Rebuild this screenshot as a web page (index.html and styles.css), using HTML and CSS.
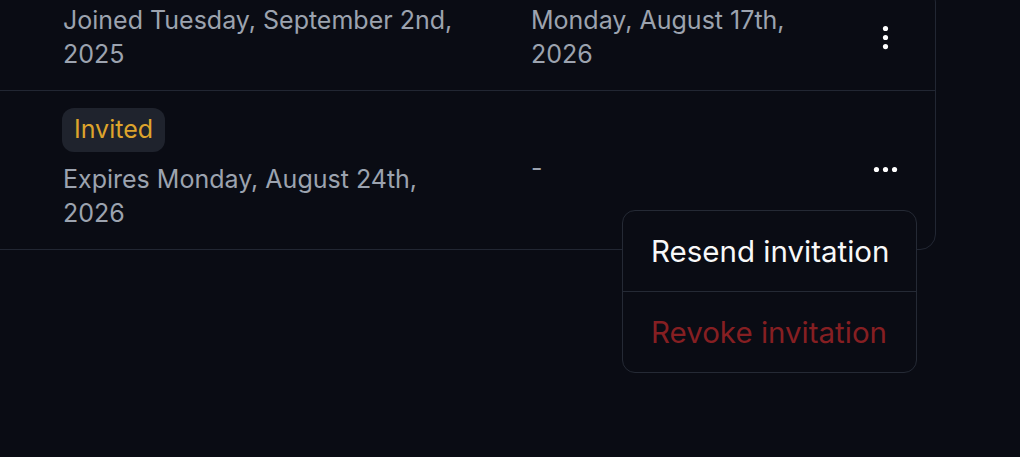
FILE: index.html
```html
<!DOCTYPE html>
<html lang="en">
<head>
<meta charset="utf-8">
<title>Members</title>
<link rel="stylesheet" href="styles.css">
</head>
<body>
<div class="wrap">
  <div class="table">
    <div class="row">
      <div class="cell c1"><div class="txt">Joined Tuesday, September 2nd, 2025</div></div>
      <div class="cell c2"><div class="txt">Monday, August 17th, 2026</div></div>
      <div class="cell c3">
        <svg class="icon" viewBox="0 0 24 24" width="31" height="31"><circle cx="12" cy="5" r="2"/><circle cx="12" cy="12" r="2"/><circle cx="12" cy="19" r="2"/></svg>
      </div>
    </div>
    <div class="row last">
      <div class="cell c1">
        <span class="badge">Invited</span>
        <div class="txt">Expires Monday, August 24th, 2026</div>
      </div>
      <div class="cell c2"><div class="txt">-</div></div>
      <div class="cell c3">
        <svg class="icon" viewBox="0 0 24 24" width="31" height="31"><circle cx="5" cy="12" r="2"/><circle cx="12" cy="12" r="2"/><circle cx="19" cy="12" r="2"/></svg>
      </div>
    </div>
  </div>
  <div class="menu">
    <div class="item">Resend invitation</div>
    <div class="item danger">Revoke invitation</div>
  </div>
</div>
</body>
</html>
```
FILE: styles.css
```css
html, body {
  margin: 0;
  padding: 0;
  background: #0a0c14;
  height: 100%;
  overflow: hidden;
}
body {
  font-family: Inter, "Noto Sans", sans-serif;
  color: #9ca3af;
}
.wrap {
  position: relative;
  margin: -14px 0 0 -40px;
  width: 976px;
}
.table {
  border: 1px solid #222733;
  border-radius: 16px;
}
.row {
  display: grid;
  grid-template-columns: 570px 305px 99px;
  border-bottom: 1px solid #222733;
}
.row.last {
  border-bottom: none;
}
.cell {
  padding: 17px 0 19px;
  display: flex;
  flex-direction: column;
  justify-content: center;
  font-size: 25px;
  line-height: 33.5px;
}
.c1 {
  padding-left: 102px;
  align-items: flex-start;
}
.c1 .txt {
  max-width: 405px;
}
.c2 {
  padding-right: 20px;
}
.c3 {
  align-items: center;
}
.icon {
  fill: #ffffff;
  display: block;
}
.badge {
  display: inline-block;
  background: #1f232d;
  color: #dea42c;
  border-radius: 12px;
  padding: 5.25px 12px;
  margin-left: -1px;
  margin-bottom: 11px;
}
.menu {
  position: absolute;
  left: 662px;
  top: 224px;
  width: 293px;
  background: #0a0c14;
  border: 1px solid #252a35;
  border-radius: 13px;
}
.item {
  padding: 20px 28px;
  font-size: 29.5px;
  line-height: 40px;
  color: #f8f8f8;
  white-space: nowrap;
}
.item + .item {
  border-top: 1px solid #252a35;
}
.item.danger {
  color: #861f22;
}
```
